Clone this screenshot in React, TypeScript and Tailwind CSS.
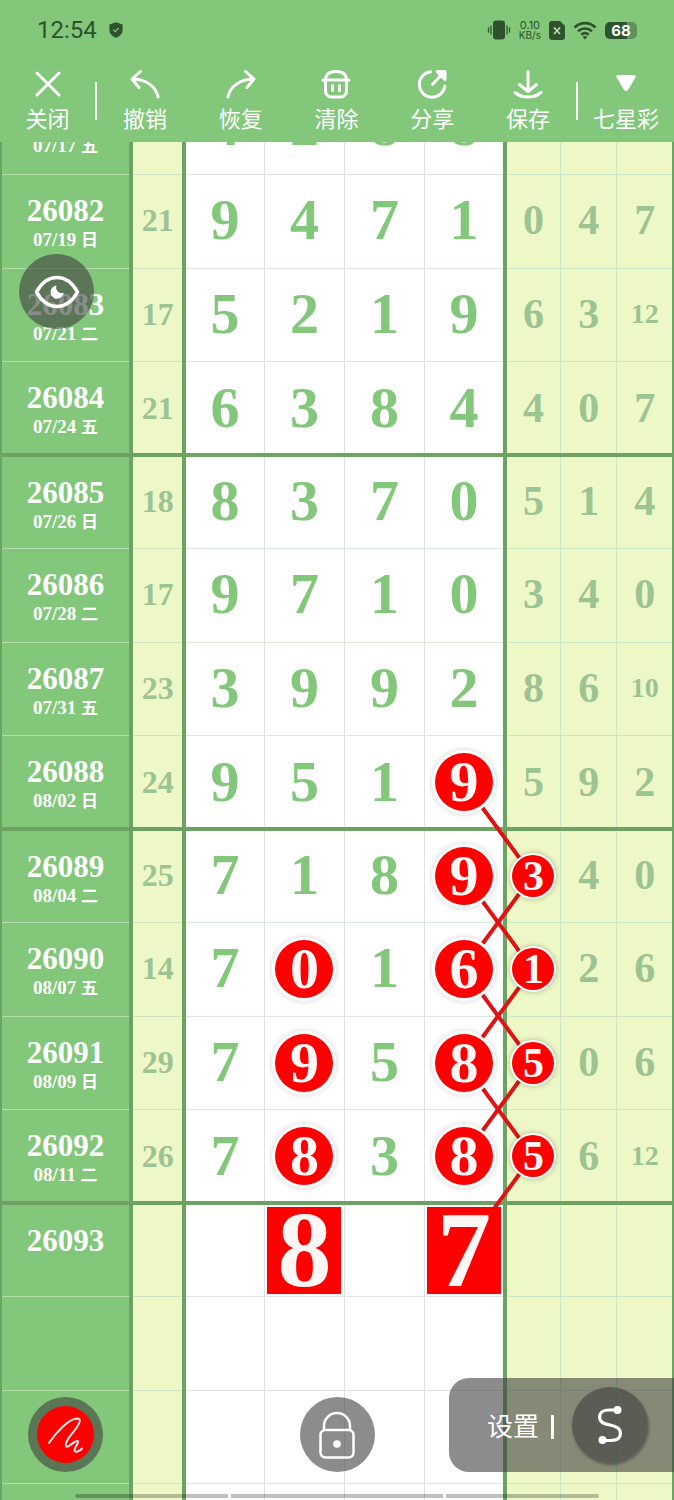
import React from 'react';

type Mark = 'circle' | 'square';

interface Draw {
  issue?: string;
  date?: string;
  day?: string;
  sum?: string;
  main: string[];
  extra: string[];
  marks?: Record<number, Mark>;
}

const draws: Draw[] = [
  { date: '07/17', day: '五', main: ['4', '2', '8', '8'], extra: ['', '', ''] },
  { issue: '26082', date: '07/19', day: '日', sum: '21', main: ['9', '4', '7', '1'], extra: ['0', '4', '7'] },
  { issue: '26083', date: '07/21', day: '二', sum: '17', main: ['5', '2', '1', '9'], extra: ['6', '3', '12'] },
  { issue: '26084', date: '07/24', day: '五', sum: '21', main: ['6', '3', '8', '4'], extra: ['4', '0', '7'] },
  { issue: '26085', date: '07/26', day: '日', sum: '18', main: ['8', '3', '7', '0'], extra: ['5', '1', '4'] },
  { issue: '26086', date: '07/28', day: '二', sum: '17', main: ['9', '7', '1', '0'], extra: ['3', '4', '0'] },
  { issue: '26087', date: '07/31', day: '五', sum: '23', main: ['3', '9', '9', '2'], extra: ['8', '6', '10'] },
  { issue: '26088', date: '08/02', day: '日', sum: '24', main: ['9', '5', '1', '9'], extra: ['5', '9', '2'], marks: { 3: 'circle' } },
  { issue: '26089', date: '08/04', day: '二', sum: '25', main: ['7', '1', '8', '9'], extra: ['3', '4', '0'], marks: { 3: 'circle', 4: 'circle' } },
  { issue: '26090', date: '08/07', day: '五', sum: '14', main: ['7', '0', '1', '6'], extra: ['1', '2', '6'], marks: { 1: 'circle', 3: 'circle', 4: 'circle' } },
  { issue: '26091', date: '08/09', day: '日', sum: '29', main: ['7', '9', '5', '8'], extra: ['5', '0', '6'], marks: { 1: 'circle', 3: 'circle', 4: 'circle' } },
  { issue: '26092', date: '08/11', day: '二', sum: '26', main: ['7', '8', '3', '8'], extra: ['5', '6', '12'], marks: { 1: 'circle', 3: 'circle', 4: 'circle' } },
  { issue: '26093', main: ['', '8', '', '7'], extra: ['', '', ''], marks: { 1: 'square', 3: 'square' } },
  { main: ['', '', '', ''], extra: ['', '', ''] },
  { main: ['', '', '', ''], extra: ['', '', ''] },
  { main: ['', '', '', ''], extra: ['', '', ''] },
];

// Rows alternate 93/94px, so the average is what the link lines are placed by.
const ROW = 93.5;
const rowY = (i: number) => i * ROW + ROW / 2;

// [from row, to row]: fourth digit -> fifth digit one row down, or back again
const linksOut = [[7, 8], [8, 9], [9, 10], [10, 11]];
const linksBack = [[8, 9], [9, 10], [10, 11], [11, 12]];

const circleBase = 'relative z-10 mx-auto flex items-center justify-center rounded-full bg-[#fe0000] text-[#fff6f6]';

const Digit: React.FC<{ value: string; mark?: Mark; small?: boolean }> = ({ value, mark, small }) => {
  if (mark === 'square') {
    return <div className="relative z-10 mx-auto flex h-[87px] w-[74px] items-center justify-center bg-[#fe0000] text-[108px] leading-none text-[#fff6f6]">{value}</div>;
  }
  if (mark === 'circle') {
    return small ? (
      <div className={`${circleBase} size-[42px] text-[42px] leading-none shadow-[0_0_0_2px_#fff,0_0_5px_3px_#0003]`}>{value}</div>
    ) : (
      <div className={`${circleBase} size-[58px] text-[58px] leading-none shadow-[0_0_0_3px_#fff,0_0_5px_4px_#0002]`}>{value}</div>
    );
  }
  return <>{value}</>;
};

const DrawRow: React.FC<{ draw: Draw; index: number }> = ({ draw, index }) => {
  const thick = index % 4 === 3 && index < 12;
  const line = thick ? 'border-b-4 border-b-[#6ca362]' : 'border-b';
  // evens out the half of the thick rule that falls inside the row
  const pad = thick ? 'px-0 pt-0.5 pb-0' : 'px-0 pt-0 pb-0.5';
  const markPad = thick ? 'px-0 pt-0.5 pb-0' : 'p-0';
  return (
    <tr className="h-[94px] odd:h-[93px]">
      <th scope="row" className={`border-x-4 border-l-2 border-x-[#6ca362] bg-[#82c77a] p-0 pt-5 align-top font-bold text-white ${line} ${thick ? '' : 'border-b-[#b2deac]'}`}>
        <div className="min-h-8 text-[31px] leading-8">{draw.issue}</div>
        {draw.date && (
          <div className="text-[19px] leading-6">
            {draw.date} <span className="font-['Noto_Sans_CJK_SC',sans-serif] text-[17px]">{draw.day}</span>
          </div>
        )}
      </th>
      <td className={`border-r-4 border-r-[#6ca362] bg-[#eef8c6] text-[32px] leading-none text-[#9cc492] ${pad} ${line} ${thick ? '' : 'border-b-[#cfe3c4]'}`}>{draw.sum}</td>
      {draw.main.map((n, i) => (
        <td key={i} className={`bg-white text-[58px] leading-none text-[#82c77a] ${draw.marks?.[i] ? markPad : pad} ${line} ${thick ? '' : 'border-b-[#dbe8de]'} ${i === 3 ? 'border-r-4 border-r-[#6ca362]' : 'border-r border-r-[#dde3dc]'}`}>
          <Digit value={n} mark={draw.marks?.[i]} />
        </td>
      ))}
      {draw.extra.map((n, i) => (
        <td key={i} className={`bg-[#eef8c6] leading-none text-[#9cc492] ${draw.marks?.[i + 4] ? markPad : pad} ${n.length > 1 ? 'text-[28px]' : 'text-[42px]'} ${line} ${thick ? '' : 'border-b-[#cbe6c8]'} ${i === 2 ? 'border-r-2 border-r-[#6ca362]' : 'border-r border-r-[#cbe6c8]'}`}>
          <Digit value={n} mark={draw.marks?.[i + 4]} small />
        </td>
      ))}
    </tr>
  );
};

const ToolButton: React.FC<{ label: string; className?: string; children: React.ReactNode }> = ({ label, className = 'flex-1', children }) => (
  <button type="button" className={`flex flex-col items-center ${className}`}>
    <svg viewBox="0 0 32 32" className="size-8" fill="none" stroke="currentColor" strokeWidth="3" strokeLinecap="round" strokeLinejoin="round" aria-hidden="true">
      {children}
    </svg>
    <span className="text-[22px] leading-[34px] whitespace-nowrap">{label}</span>
  </button>
);

const StatusBar = () => (
  <div className="flex h-[60px] items-center justify-between px-[37px] text-[#2f522c]">
    <div className="flex items-center gap-3">
      <span className="font-[Roboto,sans-serif] text-[24px] leading-none">12:54</span>
      <svg viewBox="0 0 14 16" className="h-4 w-3.5" aria-hidden="true">
        <path d="M7 0.3 13.600 2.400V8c0 3.800-2.900 6.500-6.600 7.800C3.300 14.500.4 11.800.4 8V2.400z" fill="#2f522c" />
        <path d="m4.300 7.600 2 2 3.600-3.700" fill="none" stroke="#82c77a" strokeWidth="1.200" />
      </svg>
    </div>
    <div className="flex items-center gap-2">
      <svg viewBox="0 0 24 20" className="h-5 w-6" fill="#2f522c" aria-hidden="true">
        <rect x="6" y="0.500" width="12" height="19" rx="3" />
        <path d="M1.500 8v4M4 6v8M20 6v8M22.500 8v4" stroke="#2f522c" strokeWidth="1.300" strokeLinecap="round" />
      </svg>
      <span className="flex flex-col items-center font-[Inter,sans-serif] text-[10px] leading-[10px]">
        <span className="text-[11px]">0.10</span>
        <span>KB/s</span>
      </span>
      <svg viewBox="0 0 16 19" className="h-[19px] w-4" aria-hidden="true">
        <path d="M3 0h8l5 5v11a3 3 0 0 1-3 3H3a3 3 0 0 1-3-3V3a3 3 0 0 1 3-3z" fill="#2f522c" />
        <path d="m5 6.500 6 6.500m0-6.500L5 13" stroke="#b5dcae" strokeWidth="1.800" />
      </svg>
      <svg viewBox="0 0 24 19" className="h-[19px] w-6" fill="none" stroke="#2f522c" strokeWidth="2.600" aria-hidden="true">
        <path d="M1.500 6.500C7.500 .700 16.500 .700 22.500 6.500M5 10.300c4-3.700 10-3.700 14 0M8.300 13.800c2.200-1.900 5.200-1.900 7.400 0" />
        <path d="m9.600 15.700 2.400 2.800 2.400-2.800c-1.400-1.100-3.400-1.100-4.800 0z" fill="#2f522c" stroke="none" />
      </svg>
      <span className="flex h-[17px] w-8 items-center justify-center rounded-[5px] bg-linear-to-r from-[#2f522c] from-70% to-[#61925b] to-70% font-[Inter,sans-serif] text-[15px] leading-none font-bold text-white">68</span>
    </div>
  </div>
);

const Toolbar = () => (
  <nav className="flex items-start pt-2">
    <ToolButton label="关闭" className="w-[95px]">
      <path d="M5 5 27 27M27 5 5 27" />
    </ToolButton>
    <span className="mt-3.5 h-[38px] w-0.5 bg-white" />
    <ToolButton label="撤销">
      <path d="M11.500 3.500 3 11l7 8.500M3.500 11C16 11 27 18 29 29" />
    </ToolButton>
    <ToolButton label="恢复">
      <path d="M20.500 3.500 29 11l-7 8.500M28.500 11C16 11 5 18 3 29" />
    </ToolButton>
    <ToolButton label="清除">
      <path d="M3 12h26M5.500 12C5.500 6 10 3.500 16 3.500S26.500 6 26.500 12v11a6 6 0 0 1-6 6h-9a6 6 0 0 1-6-6zM12.500 17.500v5M19.500 17.500v5" />
    </ToolButton>
    <ToolButton label="分享">
      <path d="M14.500 3.700A12.800 12.800 0 1 0 28.800 18M16.500 16.500 28 4M21 3.500h8v8z" />
    </ToolButton>
    <ToolButton label="保存">
      <path d="M16 3.500v20M7.500 16.500l8.500 7 8.500-7M3 24.500c7 6 19 6 26 0" />
    </ToolButton>
    <span className="mt-3.5 h-[38px] w-0.5 bg-white" />
    <ToolButton label="七星彩" className="w-24">
      <path d="M7.700 8.500h16.600L16.800 21q-.8 1-1.600 0z" fill="currentColor" />
    </ToolButton>
  </nav>
);

const roundBtn = 'absolute z-20 flex size-[75px] items-center justify-center rounded-full bg-[#404040]/60 text-white';

export default function App() {
  return (
    <div className="flex h-screen flex-col overflow-hidden bg-white font-['Noto_Sans_CJK_SC',sans-serif]">
      <header className="relative z-30 h-[142px] shrink-0 bg-[#82c77a] text-white">
        <StatusBar />
        <Toolbar />
      </header>

      <main className="relative min-h-0 flex-1 overflow-hidden">
        {/* the list is scrolled part of the way into its first row */}
        <div className="relative -mt-[61px]">
          <table className="w-full table-fixed border-collapse text-center font-['Liberation_Serif','Noto_Sans_CJK_SC',serif] font-bold">
            <colgroup>
              <col className="w-[130px]" />
              <col className="w-[53px]" />
              <col className="w-20" />
              <col className="w-20" />
              <col className="w-20" />
              <col className="w-20" />
              <col className="w-14" />
              <col className="w-14" />
              <col className="w-14" />
            </colgroup>
            <tbody>
              {draws.map((d, i) => (
                <DrawRow key={i} draw={d} index={i} />
              ))}
            </tbody>
          </table>
          <svg className="pointer-events-none absolute inset-0 h-full w-full" stroke="#e01212" strokeWidth="4" aria-hidden="true">
            {linksOut.map(([a, b]) => (
              <line key={`o${a}`} x1="68.8%" y1={rowY(a)} x2="79%" y2={rowY(b)} />
            ))}
            {linksBack.map(([a, b]) => (
              <line key={`b${a}`} x1="79%" y1={rowY(a)} x2="68.8%" y2={rowY(b)} />
            ))}
          </svg>
        </div>

        <button type="button" aria-label="显示" className={`${roundBtn} top-28 left-[19px]`}>
          <svg viewBox="0 0 46 34" className="h-[34px] w-[46px]" aria-hidden="true">
            <path d="M2.500 17C8 7 15 2.500 23 2.500S38 7 43.500 17C38 27 31 31.500 23 31.500S8 27 2.500 17z" fill="none" stroke="currentColor" strokeWidth="3.600" strokeLinejoin="round" />
            <path d="M22.500 10.500a6.600 6.600 0 1 0 7.200 7.200 5.600 5.600 0 0 1-7.200-7.200z" fill="currentColor" />
          </svg>
        </button>

        <button type="button" aria-label="画笔" className={`${roundBtn} bottom-7 left-7`}>
          <span className="flex size-[57px] items-center justify-center rounded-full bg-[#fe0000]">
            <svg viewBox="0 0 36 36" className="size-9" fill="none" stroke="#ffe9e9" strokeWidth="2" strokeLinecap="round" strokeLinejoin="round" aria-hidden="true">
              <path d="M1 26C9 14 21 2 29 1.500c5 0 2.500 5-1 10C24 17.500 16.500 24 18 29c1.500 3 8-5.500 11.500-5 2.500.8-3.500 6.500-3 9.500.8 2.500 5 1 7.500-2" />
            </svg>
          </span>
        </button>

        <div className="pointer-events-none absolute inset-x-0 bottom-7 z-20 flex justify-center">
          <button type="button" aria-label="锁定" className="pointer-events-auto flex size-[75px] items-center justify-center rounded-full bg-[#404040]/60 text-white">
            <svg viewBox="0 0 36 48" className="h-12 w-9" fill="none" stroke="currentColor" strokeWidth="2.500" aria-hidden="true">
              <rect x="1.500" y="19" width="33" height="27.500" rx="5" />
              <path d="M5 19v-4a13 13 0 0 1 26 0v4" />
              <circle cx="18" cy="33" r="3.800" fill="currentColor" stroke="none" />
            </svg>
          </button>
        </div>

        <div className="absolute right-0 bottom-7 z-20 flex h-[94px] w-[225px] items-center rounded-l-[20px] bg-[#404040]/60 pl-[38px] text-white">
          <button type="button" className="text-[26px] leading-8 whitespace-nowrap">设置</button>
          <span className="mt-1 ml-3 h-6 w-[3px] bg-white" />
          <button type="button" aria-label="连线" className="ml-[18px] flex size-[76px] items-center justify-center rounded-full bg-[#404040]/60 shadow-[1px_2px_3px_#0005]">
            <svg viewBox="0 0 24 38" className="h-[38px] w-6" fill="none" stroke="currentColor" strokeWidth="3.200" aria-hidden="true">
              <path d="M19.500 4H11C4 4 1.600 7.500 1.600 11c0 5 3.400 6.500 10.400 8s10.400 3.500 10.400 8.500c0 4.500-3.400 7-9.400 7H5" />
              <circle cx="19.500" cy="4" r="4" fill="currentColor" stroke="none" />
              <circle cx="4.500" cy="34" r="4" fill="currentColor" stroke="none" />
            </svg>
          </button>
        </div>

        <div className="absolute inset-x-[75px] bottom-0.5 z-10 flex h-1">
          <span className="flex-[153] rounded-l-full bg-black/25" />
          <span className="w-[3px] bg-white" />
          <span className="flex-[212] bg-black/25" />
          <span className="w-[3px] bg-white" />
          <span className="flex-[153] rounded-r-full bg-black/25" />
        </div>
      </main>
    </div>
  );
}
